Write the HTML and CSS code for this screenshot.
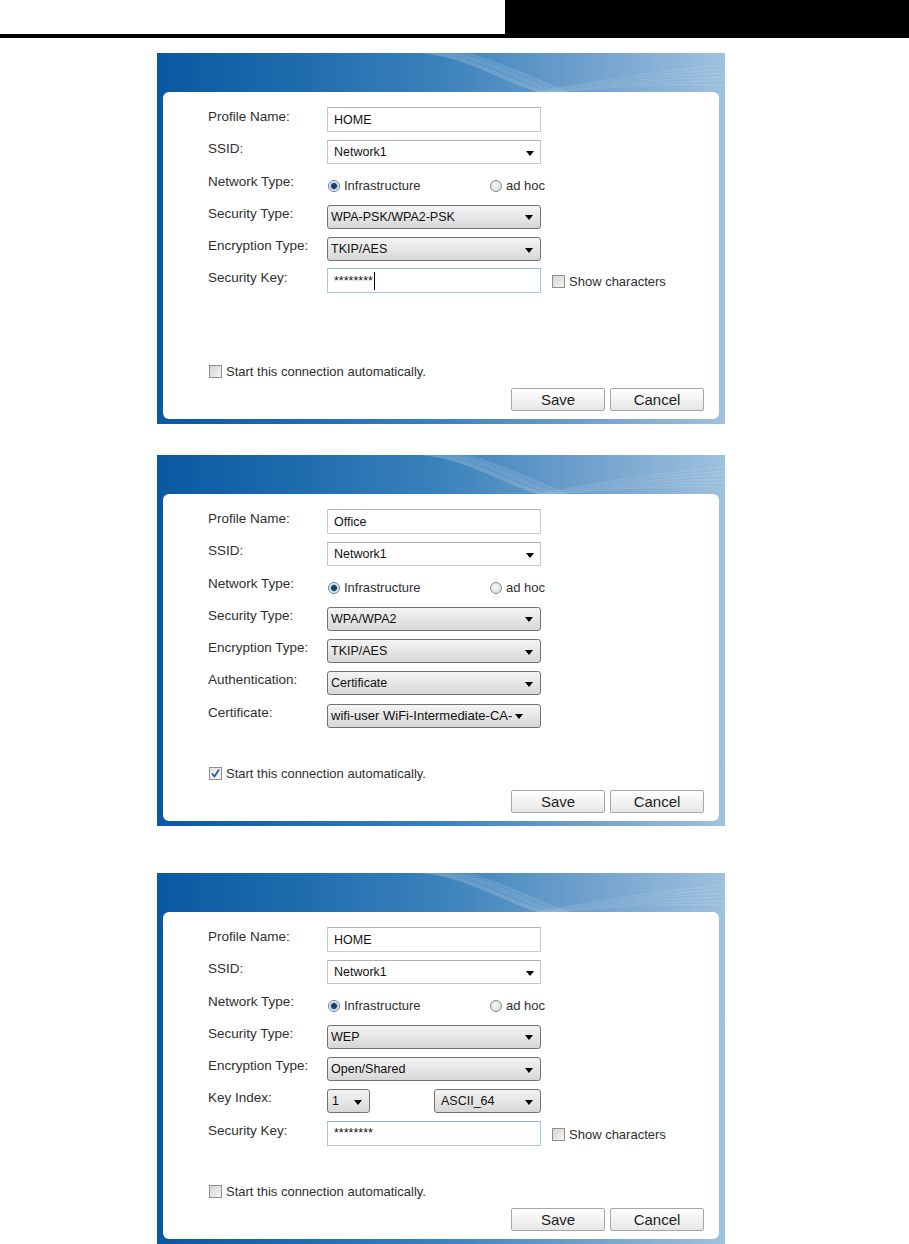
FILE: index.html
```html
<!DOCTYPE html>
<html lang="en">
<head>
<meta charset="utf-8">
<title>Wireless Profile</title>
<link rel="stylesheet" href="styles.css">
</head>
<body>
<div class="topbar"><div class="topbar-left"></div><div class="topbar-right"></div></div>

<main class="dialogs">

  <section class="dialog">
    <div class="dialog-head">
      <svg class="wave" width="568" height="39" viewBox="0 0 568 39">
        <g fill="none" stroke="#ffffff" stroke-width="0.6" opacity="0.3">
          <path d="M266 0 C310 4 345 28 382 39"/><path d="M270 0 C312 4 346 28 384 39"/><path d="M274 0 C314 5 348 27 386 39"/><path d="M278 0 C316 5 350 27 388 39"/><path d="M282 0 C318 6 352 27 390 39"/><path d="M286 0 C322 6 356 26 394 39"/><path d="M290 0 C326 7 358 25 396 39"/><path d="M294 0 C330 7 361 25 399 39"/><path d="M298 0 C333 8 364 24 402 39"/><path d="M304 0 C338 9 368 23 406 39"/><path d="M310 0 C342 9 372 23 410 39"/>
        </g>
        <g fill="none" stroke="#ffffff" stroke-width="0.6" opacity="0.22">
          <path d="M380 39 C430 30 480 20 568 12"/><path d="M384 39 C434 31 484 22 568 16"/><path d="M388 39 C438 32 488 24 568 20"/><path d="M392 39 C442 33 492 26 568 24"/><path d="M396 39 C446 34 496 28 568 28"/><path d="M400 39 C450 35 500 30 568 32"/>
        </g>
      </svg>
    </div>
    <div class="panel">
      <div class="form">
        <div class="row"><span class="label">Profile Name:</span><div class="field text">HOME</div></div>
        <div class="row"><span class="label">SSID:</span><div class="field combo"><span>Network1</span><span class="arrow"></span></div></div>
        <div class="row"><span class="label">Network Type:</span>
          <div class="radios"><span class="radio-item"><span class="radio on"></span>Infrastructure</span><span class="radio-item"><span class="radio"></span>ad hoc</span></div></div>
        <div class="row"><span class="label">Security Type:</span><div class="field select"><span>WPA-PSK/WPA2-PSK</span><span class="arrow"></span></div></div>
        <div class="row"><span class="label">Encryption Type:</span><div class="field select"><span>TKIP/AES</span><span class="arrow"></span></div></div>
        <div class="row"><span class="label">Security Key:</span><div class="field text focus"><span>********</span><span class="caret"></span></div>
          <span class="show"><span class="checkbox"></span>Show characters</span></div>
      </div>
      <div class="footer">
        <span class="check-row"><span class="checkbox"></span>Start this connection automatically.</span>
        <div class="buttons"><span class="btn">Save</span><span class="btn">Cancel</span></div>
      </div>
    </div>
  </section>

  <section class="dialog">
    <div class="dialog-head">
      <svg class="wave" width="568" height="39" viewBox="0 0 568 39">
        <g fill="none" stroke="#ffffff" stroke-width="0.6" opacity="0.3">
          <path d="M266 0 C310 4 345 28 382 39"/><path d="M270 0 C312 4 346 28 384 39"/><path d="M274 0 C314 5 348 27 386 39"/><path d="M278 0 C316 5 350 27 388 39"/><path d="M282 0 C318 6 352 27 390 39"/><path d="M286 0 C322 6 356 26 394 39"/><path d="M290 0 C326 7 358 25 396 39"/><path d="M294 0 C330 7 361 25 399 39"/><path d="M298 0 C333 8 364 24 402 39"/><path d="M304 0 C338 9 368 23 406 39"/><path d="M310 0 C342 9 372 23 410 39"/>
        </g>
        <g fill="none" stroke="#ffffff" stroke-width="0.6" opacity="0.22">
          <path d="M380 39 C430 30 480 20 568 12"/><path d="M384 39 C434 31 484 22 568 16"/><path d="M388 39 C438 32 488 24 568 20"/><path d="M392 39 C442 33 492 26 568 24"/><path d="M396 39 C446 34 496 28 568 28"/><path d="M400 39 C450 35 500 30 568 32"/>
        </g>
      </svg>
    </div>
    <div class="panel">
      <div class="form">
        <div class="row"><span class="label">Profile Name:</span><div class="field text">Office</div></div>
        <div class="row"><span class="label">SSID:</span><div class="field combo"><span>Network1</span><span class="arrow"></span></div></div>
        <div class="row"><span class="label">Network Type:</span>
          <div class="radios"><span class="radio-item"><span class="radio on"></span>Infrastructure</span><span class="radio-item"><span class="radio"></span>ad hoc</span></div></div>
        <div class="row"><span class="label">Security Type:</span><div class="field select"><span>WPA/WPA2</span><span class="arrow"></span></div></div>
        <div class="row"><span class="label">Encryption Type:</span><div class="field select"><span>TKIP/AES</span><span class="arrow"></span></div></div>
        <div class="row"><span class="label">Authentication:</span><div class="field select"><span>Certificate</span><span class="arrow"></span></div></div>
        <div class="row"><span class="label">Certificate:</span><div class="field select cert"><span class="clip">wifi-user WiFi-Intermediate-CA-</span><span class="arrow"></span></div></div>
      </div>
      <div class="footer">
        <span class="check-row"><span class="checkbox checked"><svg width="11" height="11" viewBox="0 0 11 11"><path d="M2 5.5 L4.5 8.5 L9 1.5" fill="none" stroke="#2a5ea8" stroke-width="1.8"/></svg></span>Start this connection automatically.</span>
        <div class="buttons"><span class="btn">Save</span><span class="btn">Cancel</span></div>
      </div>
    </div>
  </section>

  <section class="dialog third">
    <div class="dialog-head">
      <svg class="wave" width="568" height="39" viewBox="0 0 568 39">
        <g fill="none" stroke="#ffffff" stroke-width="0.6" opacity="0.3">
          <path d="M266 0 C310 4 345 28 382 39"/><path d="M270 0 C312 4 346 28 384 39"/><path d="M274 0 C314 5 348 27 386 39"/><path d="M278 0 C316 5 350 27 388 39"/><path d="M282 0 C318 6 352 27 390 39"/><path d="M286 0 C322 6 356 26 394 39"/><path d="M290 0 C326 7 358 25 396 39"/><path d="M294 0 C330 7 361 25 399 39"/><path d="M298 0 C333 8 364 24 402 39"/><path d="M304 0 C338 9 368 23 406 39"/><path d="M310 0 C342 9 372 23 410 39"/>
        </g>
        <g fill="none" stroke="#ffffff" stroke-width="0.6" opacity="0.22">
          <path d="M380 39 C430 30 480 20 568 12"/><path d="M384 39 C434 31 484 22 568 16"/><path d="M388 39 C438 32 488 24 568 20"/><path d="M392 39 C442 33 492 26 568 24"/><path d="M396 39 C446 34 496 28 568 28"/><path d="M400 39 C450 35 500 30 568 32"/>
        </g>
      </svg>
    </div>
    <div class="panel">
      <div class="form">
        <div class="row"><span class="label">Profile Name:</span><div class="field text">HOME</div></div>
        <div class="row"><span class="label">SSID:</span><div class="field combo"><span>Network1</span><span class="arrow"></span></div></div>
        <div class="row"><span class="label">Network Type:</span>
          <div class="radios"><span class="radio-item"><span class="radio on"></span>Infrastructure</span><span class="radio-item"><span class="radio"></span>ad hoc</span></div></div>
        <div class="row"><span class="label">Security Type:</span><div class="field select"><span>WEP</span><span class="arrow"></span></div></div>
        <div class="row"><span class="label">Encryption Type:</span><div class="field select"><span>Open/Shared</span><span class="arrow"></span></div></div>
        <div class="row"><span class="label">Key Index:</span>
          <div class="pair"><div class="field select small"><span>1</span><span class="arrow"></span></div><div class="field select medium"><span>ASCII_64</span><span class="arrow"></span></div></div></div>
        <div class="row"><span class="label">Security Key:</span><div class="field text focus"><span>********</span></div>
          <span class="show"><span class="checkbox"></span>Show characters</span></div>
      </div>
      <div class="footer">
        <span class="check-row"><span class="checkbox"></span>Start this connection automatically.</span>
        <div class="buttons"><span class="btn">Save</span><span class="btn">Cancel</span></div>
      </div>
    </div>
  </section>

</main>
</body>
</html>
```

FILE: styles.css
```css
* { box-sizing: border-box; }

body {
  margin: 0;
  background: #ffffff;
  font-family: "Liberation Sans", Arial, sans-serif;
  color: #2e2e2e;
}

.topbar {
  display: flex;
  height: 38px;
}
.topbar-left {
  width: 505px;
  border-bottom: 4px solid #000;
}
.topbar-right {
  flex: 1;
  background: #000;
}

.dialogs {
  display: flex;
  flex-direction: column;
  padding: 15px 0 0 157px;
}

.dialog {
  width: 568px;
  height: 371px;
  flex: none;
  padding: 0 6px 5px 6px;
  display: flex;
  flex-direction: column;
  background: linear-gradient(90deg, #0a58a1 0%, #1f6cad 25%, #3b82bb 50%, #6ea0cc 75%, #9fc1de 100%);
}
.dialog + .dialog { margin-top: 31px; }
.dialog.third { margin-top: 47px; }

.dialog-head {
  height: 39px;
  margin: 0 -6px;
  flex: none;
}
.wave { display: block; }

.panel {
  flex: 1;
  background: #fff;
  border-radius: 6px;
  padding: 16px 15px 8px 45px;
  display: flex;
  flex-direction: column;
}

.form {
  display: flex;
  flex-direction: column;
  gap: 8.3px;
}

.row {
  display: grid;
  grid-template-columns: 119px 214px auto;
  height: 24px;
  align-items: start;
}

.label {
  font-size: 13.5px;
  line-height: 18px;
  color: #2f2f2f;
  white-space: nowrap;
}

.field {
  display: flex;
  align-items: center;
  height: 24px;
  padding: 0 6px 0 5px;
  font-size: 12.5px;
  color: #111;
  white-space: nowrap;
  overflow: hidden;
}

.field.text {
  height: 25px;
  margin-top: -1px;
  border: 1px solid #cacaca;
  border-top-color: #b4b4b4;
  background: #fff;
  padding-left: 6px;
}
.field.text.focus {
  border-color: #a9c7e3;
  border-top-color: #8fb3d6;
}
.caret {
  width: 1px;
  height: 18px;
  background: #000;
  margin-left: 1px;
}

.field.combo {
  border: 1px solid #c6c6c6;
  border-top-color: #b0b0b0;
  background: #fff;
  padding-left: 6px;
}

.field.select {
  border: 1px solid #737373;
  border-radius: 3px;
  background: linear-gradient(#f4f4f4, #e6e6e6 50%, #d7d7d7);
  padding-left: 3px;
  padding-right: 7px;
}

.arrow {
  margin-left: auto;
  flex: none;
  width: 0;
  height: 0;
  border-left: 4px solid transparent;
  border-right: 4px solid transparent;
  border-top: 5px solid #000;
  margin-top: 2px;
}

.field.cert { padding-right: 5px; }
.clip {
  overflow: hidden;
  font-size: 13px;
}
.cert .arrow { margin-left: 3px; }

.pair {
  display: flex;
  justify-content: space-between;
}
.field.select.small { width: 43px; padding-left: 4px; }
.field.select.medium { width: 107px; padding-left: 6px; }

.radios {
  display: flex;
  justify-content: space-between;
  width: 218px;
  height: 24px;
  align-items: center;
  padding-top: 2px;
  padding-left: 1px;
  font-size: 13px;
  color: #2f2f2f;
}
.radio-item {
  display: flex;
  align-items: center;
  gap: 4px;
}
.radio {
  width: 12px;
  height: 12px;
  border-radius: 50%;
  border: 1px solid #8c8c8c;
  background: radial-gradient(circle at 40% 40%, #f6f6f6, #d6d6d6);
}
.radio.on {
  border-color: #5f7fa4;
  background: radial-gradient(circle, #1d3f6c 0 2.5px, #5b86b8 3px, #dbe7f3 3.8px, #eef2f6 5px);
}

.show {
  display: flex;
  align-items: center;
  gap: 4px;
  height: 24px;
  margin-left: 11px;
  padding-top: 1px;
  font-size: 13px;
  color: #2f2f2f;
  white-space: nowrap;
}

.checkbox {
  width: 13px;
  height: 13px;
  flex: none;
  border: 1px solid #8e8e8e;
  background: linear-gradient(135deg, #d4d4d4, #f4f4f4);
  display: flex;
  align-items: center;
  justify-content: center;
}
.checkbox.checked {
  background: linear-gradient(135deg, #e2e2e2, #fafafa);
}

.footer {
  margin-top: auto;
  display: flex;
  flex-direction: column;
}

.check-row {
  display: flex;
  align-items: center;
  gap: 4px;
  height: 18px;
  margin-left: 1px;
  font-size: 13px;
  color: #2f2f2f;
}

.buttons {
  display: flex;
  justify-content: flex-end;
  gap: 5px;
  margin-top: 8px;
}
.btn {
  width: 94px;
  height: 23px;
  display: flex;
  align-items: center;
  justify-content: center;
  border: 1px solid #a7a7a7;
  border-radius: 2px;
  background: linear-gradient(#ffffff, #f3f3f3 50%, #e6e6e6);
  font-size: 15px;
  color: #1e1e1e;
}
```
